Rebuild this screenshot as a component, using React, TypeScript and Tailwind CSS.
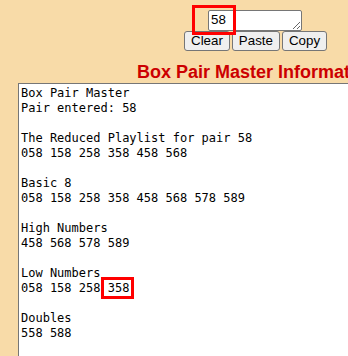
import React from 'react';

const REPORT = `Box Pair Master
Pair entered: 58

The Reduced Playlist for pair 58
058 158 258 358 458 568

Basic 8
058 158 258 358 458 568 578 589

High Numbers
458 568 578 589

Low Numbers
058 158 258 358

Doubles
558 588`;

export default function App() {
  return (
    <div className="relative h-[356px] w-full overflow-hidden bg-[#f8dba8] font-['Liberation_Sans',Arial,sans-serif]">
      {/* pair input + actions */}
      <div className="flex flex-col items-start pl-[184px] pt-[10px]">
        <textarea
          defaultValue="58"
          className="ml-[24px] h-[21px] w-[94px] rounded-[2px] border border-[#767676] bg-white px-[2px] py-[1px] text-[13.33px] leading-[15px] text-black outline-none"
        />
        <div className="flex gap-[2px]">
          {['Clear', 'Paste', 'Copy'].map(label => (
            <button
              key={label}
              className="h-[20px] rounded-[3px] border border-[#767676] bg-[#efefef] px-[6px] text-[13.33px] leading-[16px] text-black"
            >
              {label}
            </button>
          ))}
        </div>
      </div>

      <h1 className="mt-[10px] whitespace-nowrap pl-[137px] text-[18px] font-bold leading-[22px] text-[#cc0000]">
        Box Pair Master Information
      </h1>

      <div className="ml-[18px] h-[400px] w-[480px] border border-[#767676] bg-white px-[2px] py-[2px] font-['DejaVu_Sans_Mono',monospace] text-[12px] leading-[15px] whitespace-pre text-black">
        {REPORT}
      </div>

      {/* annotation boxes */}
      <div className="absolute left-[192px] top-[5px] h-[30px] w-[44px] border-[3px] border-[#ff0000]" />
      <div className="absolute left-[101px] top-[277px] h-[22px] w-[33px] border-[3px] border-[#ff0000]" />
    </div>
  );
}
